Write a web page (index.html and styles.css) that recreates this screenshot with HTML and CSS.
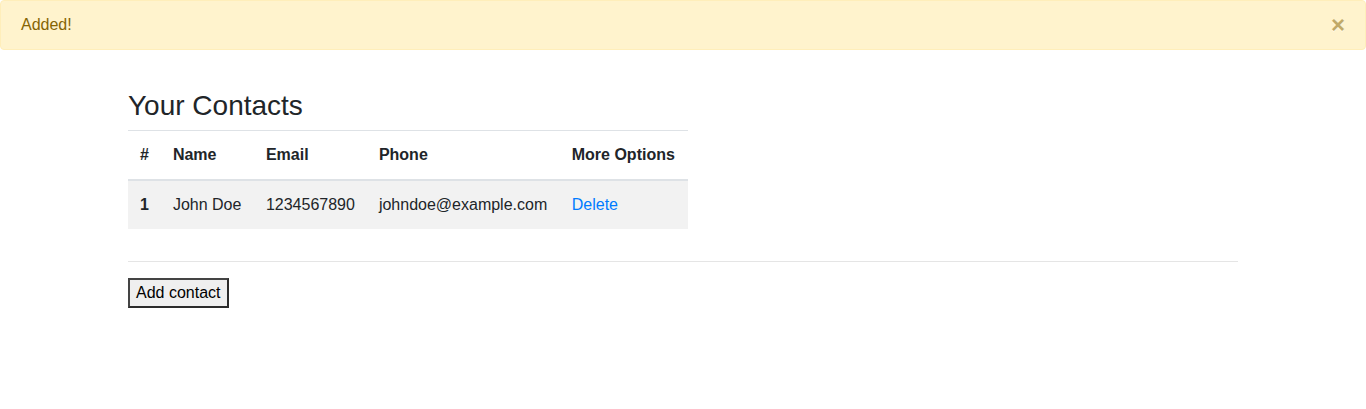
FILE: index.html
```html
<!DOCTYPE html>
<html lang="en">
<head>
<meta charset="utf-8">
<title>Contacts</title>
<link rel="stylesheet" href="styles.css">
</head>
<body>
<div class="alert" role="alert">
  Added!
  <button type="button" class="alert-close" aria-label="Close"><span aria-hidden="true">&times;</span></button>
</div>
<div class="container">
  <h3 class="title">Your Contacts</h3>
  <table class="contacts">
    <thead>
      <tr>
        <th>#</th>
        <th class="name">Name</th>
        <th>Email</th>
        <th class="name">Phone</th>
        <th class="wide">More Options</th>
      </tr>
    </thead>
    <tbody>
      <tr>
        <th>1</th>
        <td class="name">John Doe</td>
        <td>1234567890</td>
        <td class="name">johndoe@example.com</td>
        <td class="wide"><a href="#" class="link">Delete</a></td>
      </tr>
    </tbody>
  </table>
  <hr class="divider">
  <button type="button" class="add-btn">Add contact</button>
</div>
</body>
</html>
```

FILE: styles.css
```css
* { box-sizing: border-box; }
html, body { margin: 0; padding: 0; }
body {
  font-family: "Liberation Sans", Arial, sans-serif;
  font-size: 16px;
  line-height: 1.5;
  color: #212529;
  background: #fff;
}
.alert {
  position: relative;
  padding: 12px 20px;
  margin-bottom: 16px;
  border: 1px solid #ffeeba;
  border-radius: 4px;
  background: #fff3cd;
  color: #856404;
}
.alert-close {
  position: absolute;
  top: 0;
  right: 0;
  padding: 12px 20px;
  background: transparent;
  border: 0;
  font-family: inherit;
  font-size: 24px;
  font-weight: 700;
  line-height: 1;
  color: #856404;
  opacity: .5;
  text-shadow: 0 1px 0 #fff;
  cursor: pointer;
}
.container {
  max-width: 1140px;
  margin: 0 auto;
  padding: 23px 15px 0;
}
.title {
  margin: 0 0 7px;
  font-size: 28px;
  font-weight: 500;
  line-height: 1.2;
}
.contacts {
  border-collapse: collapse;
  margin-bottom: 16px;
}
.contacts th, .contacts td {
  padding: 12px;
  text-align: left;
  vertical-align: top;
  border-top: 1px solid #dee2e6;
}
.contacts .name { padding-right: 12.5px; }
.contacts .wide { padding-right: 13px; }
.contacts th { font-weight: 700; }
.contacts thead th {
  vertical-align: bottom;
  border-bottom: 2px solid #dee2e6;
}
.contacts tbody tr { background: #f2f2f2; }
.link { color: #007bff; text-decoration: none; }
.divider {
  margin: 32px 0 16px;
  border: 0;
  border-top: 1px solid rgba(0,0,0,.1);
  height: 0;
}
.add-btn {
  font-family: inherit;
  font-size: 16px;
  line-height: 24px;
  padding: 1px 6px;
  background: #efefef;
  color: #000;
  border: 2px solid #2b2b2b;
  border-top-color: #444;
  border-left-color: #444;
}
```
